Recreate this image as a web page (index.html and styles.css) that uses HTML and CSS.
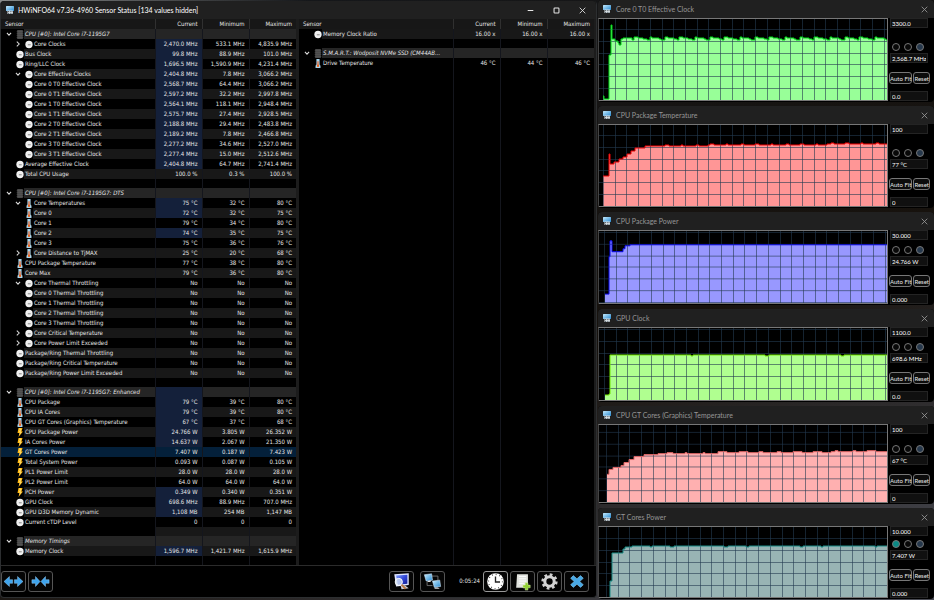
FILE: index.html
```html
<!DOCTYPE html>
<html lang="en">
<head>
<meta charset="utf-8">
<title>HWiNFO64 Sensor Status</title>
<link rel="stylesheet" href="styles.css">
</head>
<body>
<svg class="defs" aria-hidden="true">
  <defs>
    <linearGradient id="blueGlass" x1="0" y1="0" x2="1" y2="1"><stop offset="0" stop-color="#c6ecff"/><stop offset="1" stop-color="#2688d0"/></linearGradient>
    <linearGradient id="screen" x1="0" y1="0" x2="1" y2="1"><stop offset="0" stop-color="#7fa0ff"/><stop offset=".5" stop-color="#3348d8"/><stop offset="1" stop-color="#101c90"/></linearGradient>
  </defs>
  <symbol id="i-app" viewBox="0 0 16 16"><rect x="0" y="0" width="16" height="10" rx="1" fill="url(#blueGlass)"/><path d="M3 9h11v7H3z" fill="#e2e8ec"/><path d="M5 10v2.500M8.500 10v2.500M12 10v2.500M5 14v2M8.500 14v2M12 14v2" stroke="#26343e" stroke-width="1.4"/></symbol>
  <symbol id="i-clock" viewBox="0 0 14 14"><circle cx="7" cy="7" r="6.4" fill="#f0f0f0"/><path d="M5 7.500h5" fill="none" stroke="#777" stroke-width="1.500"/></symbol>
  <symbol id="i-temp" viewBox="0 0 14 20"><path d="M3.500 0h7v12l2 3v5h-11v-5l2-3z" fill="#a9d4ea"/><path d="M7 5v11" stroke="#e8622a" stroke-width="2.600"/><circle cx="7" cy="15" r="2.6" fill="#e8621c"/></symbol>
  <symbol id="i-power" viewBox="0 0 14 18"><path d="M4 0h8l-2 7h3L4 18l2-8H2z" fill="#ffb812"/><path d="M5 2h4L6 8h3l-3 5" fill="none" stroke="#ffe88a" stroke-width="1.6"/></symbol>
  <symbol id="i-chip" viewBox="0 0 14 16"><rect x="2" y="0" width="10" height="16" rx="1" fill="#484848"/><path d="M1 3h12M1 6.500h12M1 10h12M1 13.500h12" stroke="#5c5c5c"/></symbol>
  <symbol id="i-down" viewBox="0 0 10 10"><path d="M1.500 3 5 7l3.500-4" fill="none" stroke="#ddd" stroke-width="1.7"/></symbol>
  <symbol id="i-right" viewBox="0 0 10 10"><path d="M3 1l4 4-4 4" fill="none" stroke="#ddd" stroke-width="1.7"/></symbol>
  <symbol id="i-close" viewBox="0 0 10 10"><path d="M1 1l8 8M9 1 1 9" stroke="currentColor" stroke-width="1.200"/></symbol>
</svg>

<main class="desktop">
  <section class="window sensors">
    <header class="titlebar">
      <svg class="app-icon"><use href="#i-app"/></svg>
      <h1>HWiNFO64 v7.36-4960 Sensor Status [134 values hidden]</h1>
      <button class="caption" aria-label="Minimize"><svg viewBox="0 0 10 10"><path d="M1 5h8" stroke="currentColor" stroke-width="1.500"/></svg></button>
      <button class="caption" aria-label="Maximize"><svg viewBox="0 0 10 10"><rect x="1.500" y="1.500" width="7" height="7" rx="1" fill="none" stroke="currentColor" stroke-width="1.500"/></svg></button>
      <button class="caption" aria-label="Close"><svg><use href="#i-close"/></svg></button>
    </header>
    <div class="tables">
      <table id="left"></table>
      <table id="right"></table>
    </div>
    <footer class="toolbar">
      <button aria-label="Expand columns"><svg viewBox="0 0 24 21"><path d="M1.500 10.500 7.500 5v3.500h3.500v4H7.500V16z M22.500 10.500 16.500 5v3.500H13v4h3.500V16z" fill="#3fa4ec" stroke="#9cd4ff" stroke-width=".5"/></svg></button>
      <button aria-label="Shrink columns"><svg viewBox="0 0 24 21"><path d="M11.500 10.500 6.500 5v3.500H2.500v4h4V16z M12.500 10.500 17.500 5v3.500h4v4h-4V16z" fill="#3fa4ec" stroke="#9cd4ff" stroke-width=".5"/></svg></button>
      <span class="spacer"></span>
      <button aria-label="Screen log"><svg viewBox="0 0 24 21"><path d="M4 2.500l16-1v13L6 16z" fill="#dfe5ff"/><path d="M6 4l12.500-1v10L8 14z" fill="url(#screen)"/><path d="M11 15h5l4 3-8 1z" fill="#c9ccd6"/><circle cx="9" cy="11" r="4" fill="#d5e4f4" fill-opacity=".8" stroke="#fff"/><path d="M12 14l4.500 4.500" stroke="#b87843" stroke-width="2"/></svg></button>
      <button class="network" aria-label="Remote monitoring"><svg viewBox="0 0 24 21"><path d="M11 4.500h7v5M6 11v4h6" fill="none" stroke="#747474"/><path d="M3 3l8-1 1 7-7 1z" fill="url(#blueGlass)" stroke="#d9efff" stroke-width=".6"/><path d="M7 10l3-1v2H6z" fill="#ddd"/><path d="M12 10l8-1 1 7-7 1z" fill="url(#blueGlass)" stroke="#d9efff" stroke-width=".6"/><path d="M15 17h3l2 1.500h-6z" fill="#ddd"/></svg></button>
      <time>0:05:24</time>
      <button class="lit" aria-label="Reset clock"><svg viewBox="0 0 24 21"><circle cx="12" cy="10.500" r="9.200" fill="#fff"/><circle cx="12" cy="10.500" r="7.800" fill="none" stroke="#333" stroke-width="1.400" stroke-dasharray=".9 3.184"/><path d="M12 5v6h5" fill="none" stroke="#222" stroke-width="1.500"/></svg></button>
      <button aria-label="Log to file"><svg viewBox="0 0 24 21"><path d="M6 2.500h12v15H5z" fill="#e2e4df"/><path d="M8 5h8M8 7.500h8M8 10h8M8 12.500h6" stroke="#fff"/><path d="M15 12h3v2.500h2.500v3H18V20h-3v-2.500h-2.500v-3H15z" fill="#8fce32" stroke="#e0f8b0" stroke-width=".5"/></svg></button>
      <button aria-label="Settings"><svg viewBox="0 0 24 21"><circle cx="12" cy="10.500" r="7.600" fill="none" stroke="#d0d0d0" stroke-width="2.800" stroke-dasharray="3 2.969"/><circle cx="12" cy="10.500" r="5.200" fill="none" stroke="#d4d4d4" stroke-width="3.400"/></svg></button>
      <button aria-label="Close sensors"><svg viewBox="0 0 24 21"><path d="M5.500 7l3-3 4 3.500 4-3.500 3 3-4 3.500 4 3.500-3 3-4-3.500-4 3.500-3-3 4-3.500z" fill="#48a9e6" stroke="#8bd0f8" stroke-width=".6"/></svg></button>
    </footer>
  </section>
  <aside class="graphs" id="graphs"></aside>
</main>
<script src="app.js"></script>
</body>
</html>
```
FILE: styles.css
```css
* { box-sizing: border-box; }

body {
  margin: 0;
  background: linear-gradient(160deg, #8a8c8c 0, #15171a 12%, #17120d 60%, #4a4c55 100%);
  color: #e6e6e6;
  font: 6px/10px "DejaVu Sans Condensed", "Liberation Sans", sans-serif;
}

h1, h2 { margin: 0; font-weight: 400; white-space: nowrap; }
button, input { font: inherit; color: inherit; margin: 0; padding: 0; }
svg { display: block; overflow: visible; }
.defs { position: absolute; width: 0; height: 0; }

.desktop {
  display: grid;
  grid-template-columns: 597fr 336fr;
  gap: 1px;
  height: 100vh;
}

/* Sensor window */
.window { background: #000; border-radius: 4px; overflow: hidden; }
.sensors {
  display: flex;
  flex-direction: column;
  margin: 1px 0 2px;
  border: 1px solid #2c2e30;
  border-top: 0;
}
.titlebar {
  display: flex;
  align-items: center;
  flex: none;
  height: 18px;
  padding: 0 5px;
  background: #202020;
}
.sensors .titlebar { padding-right: 1px; }
.titlebar h1, .titlebar h2 {
  flex: 1;
  margin-left: 5px;
  font: 7px/10px Lato, "Open Sans", sans-serif;
}
.titlebar h1 { margin-left: 4px; color: #fff; }
.titlebar h2 { color: #969696; }
.app-icon { width: 8px; height: 8px; }
.caption { width: 26px; border: 0; background: none; }
.caption svg { width: 7px; height: 7px; margin: 0 auto; }

.tables {
  display: grid;
  grid-template-columns: 1fr 1fr;
  gap: 3px;
  flex: 1;
  min-height: 0;
  padding-right: 2px;
  background: #1c1c1c;
  border-bottom: 1px solid #2b2b2b;
}
table {
  width: 100%;
  height: 100%;
  border-collapse: collapse;
  table-layout: fixed;
  background: #000;
}
th, td {
  height: 10px;
  padding: 0 4px 0 0;
  border-left: 1px solid #14161d;
  font-weight: 400;
  text-align: right;
  white-space: nowrap;
  overflow: hidden;
}
th:first-child, td:first-child { padding: 0; border-left: 0; text-align: left; }
thead th { background: #171717; border-color: #303030; }
thead th:first-child { padding-left: 4px; }
.c-value { width: 47px; }
.blank td { height: 9px; line-height: 9px; }
.filler td { height: auto; }

.name { display: flex; align-items: center; height: 10px; padding-left: 5px; }
.name.child { padding-left: 14px; }
.name svg { flex: none; }
.name .twist { width: 6px; height: 6px; margin-right: 4px; }
.name .kind { width: 8px; height: 9px; }
.name .label {
  flex: 1;
  min-width: 0;
  padding-left: 1px;
  overflow: hidden;
}
.stripe td + td, .stripe .label { background: #181818; }
.group td + td, .group .label { background: #252525; }
.group .label { font-style: italic; }
tr td.fresh { background: #14203a; }
.selected td { background: #04203a; }

.toolbar {
  display: flex;
  align-items: center;
  gap: 2px;
  flex: none;
  height: 31px;
  padding: 0 7px 1px 0;
}
.toolbar button {
  width: 25px;
  height: 21px;
  background: #050505;
  border: 1px solid #555;
  border-radius: 3px;
}
.toolbar button svg { width: 100%; height: 100%; }
.toolbar .lit { border-color: #999; }
.toolbar .network { margin-left: 4px; }
.toolbar time { margin: 0 1px 0 12px; }
.spacer { flex: 1; }

/* Graph windows */
.graphs {
  display: grid;
  grid-template-rows: 102fr 102fr 93fr 93fr 98fr 91fr;
  gap: 4px;
  padding-bottom: 1px;
  min-height: 0;
}
.graph { display: flex; flex-direction: column; min-height: 0; }
.graph .close { width: 8px; height: 8px; border: 0; background: none; color: #999; }
.graph .close svg { width: 7px; height: 7px; }
.graph-body {
  display: grid;
  grid-template-columns: 1fr 38px;
  gap: 2px;
  flex: 1;
  min-height: 0;
  padding: 0 6px 1px 0;
}
.plot {
  position: relative;
  min-height: 0;
  border: 1px solid #777;
  border-left-color: #444;
}
.plot svg { position: absolute; width: 100%; height: 100%; overflow: hidden; }
.gridlines { stroke: #233a50; stroke-opacity: .6; stroke-width: 1; fill: none; }
.trace { fill: none; stroke-width: 1; }

.controls {
  display: flex;
  flex-direction: column;
  font-family: Lato, "Liberation Sans", sans-serif;
}
.controls input[type="text"] {
  width: 100%;
  height: 10px;
  padding: 0 1px;
  background: #101010;
  border: 1px solid #242424;
  line-height: 8px;
  color: #fff;
}
.controls .max { margin-bottom: auto; }
.radios { display: flex; justify-content: space-between; padding: 0 4px 2px 2px; }
.radios input {
  appearance: none;
  width: 8px;
  height: 8px;
  border: 1px solid #777;
  border-radius: 50%;
  background: #080808;
}
.radios input.blue { background: #26384c; }
.radios input.teal { background: #0b8a86; }
.actions { display: flex; gap: 1px; margin: 9px -2px 7px -1px; }
.actions button {
  flex: 23 1 0;
  height: 12px;
  background: #0c0c0c;
  border: 1px solid #777;
  border-radius: 3px;
  line-height: 9px;
  white-space: nowrap;
}
.actions button + button { flex-grow: 17; }
```
FILE: app.js
```js
const use = (id, cls) => `<svg class="${cls}"><use href="#i-${id}"/></svg>`;

// Row: [kind, label, current, minimum, maximum, flags]
// flags: c = child level, v = expanded, r = collapsed, f = fresh value, s = selected
const leftRows = [
  ["chip", "CPU [#0]: Intel Core i7-1195G7"],
  ["clock", "Core Clocks", "2,470.0 MHz", "533.1 MHz", "4,835.9 MHz", "crf"],
  ["clock", "Bus Clock", "99.8 MHz", "88.9 MHz", "101.0 MHz", "f"],
  ["clock", "Ring/LLC Clock", "1,696.5 MHz", "1,590.9 MHz", "4,231.4 MHz", "f"],
  ["clock", "Core Effective Clocks", "2,404.8 MHz", "7.8 MHz", "3,066.2 MHz", "cvf"],
  ["clock", "Core 0 T0 Effective Clock", "2,568.7 MHz", "64.4 MHz", "3,066.2 MHz", "cf"],
  ["clock", "Core 0 T1 Effective Clock", "2,597.2 MHz", "32.2 MHz", "2,997.8 MHz", "cf"],
  ["clock", "Core 1 T0 Effective Clock", "2,564.1 MHz", "118.1 MHz", "2,948.4 MHz", "cf"],
  ["clock", "Core 1 T1 Effective Clock", "2,575.7 MHz", "27.4 MHz", "2,928.5 MHz", "cf"],
  ["clock", "Core 2 T0 Effective Clock", "2,188.8 MHz", "29.4 MHz", "2,483.8 MHz", "cf"],
  ["clock", "Core 2 T1 Effective Clock", "2,189.2 MHz", "7.8 MHz", "2,466.8 MHz", "cf"],
  ["clock", "Core 3 T0 Effective Clock", "2,277.2 MHz", "34.6 MHz", "2,527.0 MHz", "cf"],
  ["clock", "Core 3 T1 Effective Clock", "2,277.4 MHz", "15.0 MHz", "2,512.6 MHz", "cf"],
  ["clock", "Average Effective Clock", "2,404.8 MHz", "64.7 MHz", "2,741.4 MHz", "f"],
  ["clock", "Total CPU Usage", "100.0 %", "0.3 %", "100.0 %"],
  null,
  ["chip", "CPU [#0]: Intel Core i7-1195G7: DTS"],
  ["temp", "Core Temperatures", "75 °C", "32 °C", "80 °C", "cvf"],
  ["temp", "Core 0", "72 °C", "32 °C", "75 °C", "cf"],
  ["temp", "Core 1", "79 °C", "34 °C", "80 °C", "c"],
  ["temp", "Core 2", "74 °C", "35 °C", "75 °C", "cf"],
  ["temp", "Core 3", "75 °C", "36 °C", "76 °C", "c"],
  ["temp", "Core Distance to TjMAX", "25 °C", "20 °C", "68 °C", "cr"],
  ["temp", "CPU Package Temperature", "77 °C", "38 °C", "80 °C"],
  ["temp", "Core Max", "79 °C", "36 °C", "80 °C"],
  ["clock", "Core Thermal Throttling", "No", "No", "No", "cv"],
  ["clock", "Core 0 Thermal Throttling", "No", "No", "No", "c"],
  ["clock", "Core 1 Thermal Throttling", "No", "No", "No", "c"],
  ["clock", "Core 2 Thermal Throttling", "No", "No", "No", "c"],
  ["clock", "Core 3 Thermal Throttling", "No", "No", "No", "c"],
  ["clock", "Core Critical Temperature", "No", "No", "No", "cr"],
  ["clock", "Core Power Limit Exceeded", "No", "No", "No", "cr"],
  ["clock", "Package/Ring Thermal Throttling", "No", "No", "No"],
  ["clock", "Package/Ring Critical Temperature", "No", "No", "No"],
  ["clock", "Package/Ring Power Limit Exceeded", "No", "No", "No"],
  null,
  ["chip", "CPU [#0]: Intel Core i7-1195G7: Enhanced", "", "", "", "f"],
  ["temp", "CPU Package", "79 °C", "39 °C", "80 °C", "f"],
  ["temp", "CPU IA Cores", "79 °C", "39 °C", "80 °C", "f"],
  ["temp", "CPU GT Cores (Graphics) Temperature", "67 °C", "37 °C", "68 °C", "f"],
  ["power", "CPU Package Power", "24.766 W", "3.805 W", "26.352 W", "f"],
  ["power", "IA Cores Power", "14.637 W", "2.067 W", "21.350 W", "f"],
  ["power", "GT Cores Power", "7.407 W", "0.187 W", "7.423 W", "s"],
  ["power", "Total System Power", "0.093 W", "0.087 W", "0.105 W"],
  ["power", "PL1 Power Limit", "28.0 W", "28.0 W", "28.0 W"],
  ["power", "PL2 Power Limit", "64.0 W", "64.0 W", "64.0 W"],
  ["power", "PCH Power", "0.349 W", "0.340 W", "0.351 W", "f"],
  ["clock", "GPU Clock", "698.6 MHz", "88.9 MHz", "707.0 MHz", "f"],
  ["clock", "GPU D3D Memory Dynamic", "1,108 MB", "254 MB", "1,147 MB", "f"],
  ["clock", "Current cTDP Level", "0", "0", "0"],
  null,
  ["chip", "Memory Timings"],
  ["clock", "Memory Clock", "1,596.7 MHz", "1,421.7 MHz", "1,615.9 MHz", "f"]
];

const rightRows = [
  ["clock", "Memory Clock Ratio", "16.00 x", "16.00 x", "16.00 x"],
  null,
  ["chip", "S.M.A.R.T.: Wodposit NVMe SSD (CM44AB..."],
  ["temp", "Drive Temperature", "46 °C", "44 °C", "46 °C"]
];

function rowHtml(row, i) {
  const stripe = i % 2 === 0 ? "stripe" : "";
  if (!row) return `<tr class="blank ${stripe}"><td></td><td></td><td></td><td></td></tr>`;
  const [kind, label, cur = "", min = "", max = "", flags = ""] = row;
  const group = kind === "chip";
  const has = f => flags.includes(f);
  const twist = group || has("v") ? use("down", "twist")
    : has("r") ? use("right", "twist") : `<svg class="twist"></svg>`;
  const cls = group ? "group" : has("s") ? "selected" : stripe;
  return `<tr class="${cls}"><td><div class="name ${has("c") ? "child" : ""}">${twist}${use(kind, "kind")}` +
    `<span class="label">${label}</span></div></td>` +
    `<td class="${has("f") ? "fresh" : ""}">${cur}</td><td>${min}</td><td>${max}</td></tr>`;
}

function fill(id, rows) {
  document.getElementById(id).innerHTML =
    `<colgroup><col><col class="c-value"><col class="c-value"><col class="c-value"></colgroup>` +
    `<thead><tr><th>Sensor</th><th>Current</th><th>Minimum</th><th>Maximum</th></tr></thead>` +
    `<tbody>${rows.map(rowHtml).join("")}<tr class="filler"><td></td><td></td><td></td><td></td></tr></tbody>`;
}
fill("left", leftRows);
fill("right", rightRows);

// start: ramp-up points [x, y]; level: plateau height; end: its last height;
// bumps: how far samples stray from the plateau; gx, gy: first grid lines
const graphs = [
  { title: "Core 0 T0 Effective Clock", max: "3300.0", value: "2,568.7 MHz", min: "0.0",
    h: 82, gx: 5, gy: 11, line: "#00d818", area: "#98ff98", level: 19, end: 19, bumps: [0, 0, 1, 0, -1, 0, 1, 0, 0, 2, 0, -1],
    start: [[4, 77], [5, 77], [5, 80], [10, 80], [10, 36], [12, 36], [12, 6], [13, 6], [13, 20], [16, 20], [16, 22], [19, 22], [19, 24], [20, 24], [20, 26], [22, 26], [22, 20], [24, 20], [24, 19]] },
  { title: "CPU Package Temperature", max: "100", value: "77 °C", min: "0",
    h: 82, gx: 5, gy: 11, line: "#f00000", area: "#ff9696", level: 21, end: 19, bumps: [0, 0, -1, 0, 0, 0, -1, 0, 1, 0, 0, 0],
    start: [[4, 51], [10, 51], [10, 29], [11, 29], [11, 39], [15, 39], [15, 37], [20, 37], [20, 34], [24, 34], [24, 32], [28, 32], [28, 29], [32, 29], [32, 26], [36, 26], [36, 23], [46, 23], [46, 21]] },
  { title: "CPU Package Power", max: "30.000", value: "24.766 W", min: "0.000",
    h: 74, gx: 6, gy: 2, line: "#0a0af0", area: "#9898ff", level: 14, end: 14, bumps: [0],
    start: [[6, 64], [10, 64], [10, 26], [11, 26], [11, 10], [13, 10], [13, 21], [24, 21], [24, 18], [26, 18], [26, 15], [31, 15]] },
  { title: "GPU Clock", max: "1100.0", value: "698.6 MHz", min: "0.0",
    h: 73, gx: 6, gy: 2, line: "#70e800", area: "#b0ff90", level: 27, end: 27, bumps: [0, 0, 0, 0, 0, 0, 0, 0, 0, 0, 0, 0, 0, 0, 1],
    start: [[6, 67], [10, 67], [10, 66], [11, 66], [11, 27]] },
  { title: "CPU GT Cores (Graphics) Temperature", max: "100", value: "67 °C", min: "0",
    h: 79, gx: 8, gy: 8, line: "#e06868", area: "#ffb0b0", level: 29, end: 27, bumps: [0, -1, 0, 0, -1, 0, 0, 0, -1, 0],
    start: [[8, 50], [10, 50], [10, 45], [14, 45], [14, 43], [22, 43], [22, 41], [25, 41], [25, 38], [30, 38], [30, 35], [35, 35], [35, 32], [45, 32], [45, 30], [59, 30]] },
  { title: "GT Cores Power", max: "10.000", value: "7.407 W", min: "0.000",
    h: 71, gx: 8, gy: 12, line: "#188a84", area: "#98b4b4", level: 19, end: 19, bumps: [0, 0, 0, 1, 0, 0, 0, 0, 0, 0], teal: true,
    start: [[11, 70], [11, 54], [13, 54], [13, 26], [24, 26], [24, 22], [26, 22], [26, 20], [33, 20]] }
];

function plotHtml(g) {
  const pts = g.start.map(p => [...p]);
  let x = pts[pts.length - 1][0];
  const x0 = x;
  for (let i = 0; x < 288; i++) {
    const base = Math.round(g.level + (g.end - g.level) * (x - x0) / (288 - x0));
    const k = i < 3 ? 0 : (i * 7 + Math.floor(i / 5)) % g.bumps.length;
    const y = base + g.bumps[k];
    const step = 2 + (i * 5) % 3;
    pts.push([x, y], [x + step, y]);
    x += step;
  }
  const line = pts.map(p => p.join(",")).join(" ");
  let lines = "";
  for (let i = 0; i < 25; i++) lines += `M${Math.round(g.gx + i * 11.7) - 0.5} 0V${g.h}`;
  for (let i = 0; g.gy + i * 11.8 < g.h - 1; i++) lines += `M0 ${Math.round(g.gy + i * 11.8) - 0.5}H288`;
  return `<svg viewBox="0 0 288 ${g.h - 1}" preserveAspectRatio="none" role="img" aria-label="${g.title} history">` +
    `<polygon points="${pts[0][0]},${g.h} ${line} ${x},${g.h}" fill="${g.area}"/>` +
    `<path class="gridlines" d="${lines}"/>` +
    `<polyline class="trace" points="${line}" stroke="${g.line}"/></svg>`;
}

document.getElementById("graphs").innerHTML = graphs.map((g, i) => `
  <section class="window graph">
    <header class="titlebar">${use("app", "app-icon")}<h2>${g.title}</h2>
      <button class="close" aria-label="Close ${g.title}">${use("close", "")}</button></header>
    <div class="graph-body">
      <div class="plot">${plotHtml(g)}</div>
      <div class="controls">
        <input class="max" type="text" aria-label="Upper bound" value="${g.max}">
        <div class="radios">
          <input class="${g.teal ? "teal" : ""}" type="radio" name="color${i}" aria-label="Line color">
          <input type="radio" name="color${i}" aria-label="Background color">
          <input class="blue" type="radio" name="color${i}" aria-label="Grid color">
        </div>
        <input type="text" aria-label="Current value" value="${g.value}" readonly>
        <div class="actions"><button>Auto Fit</button><button>Reset</button></div>
        <input type="text" aria-label="Lower bound" value="${g.min}">
      </div>
    </div>
  </section>`).join("");
```
